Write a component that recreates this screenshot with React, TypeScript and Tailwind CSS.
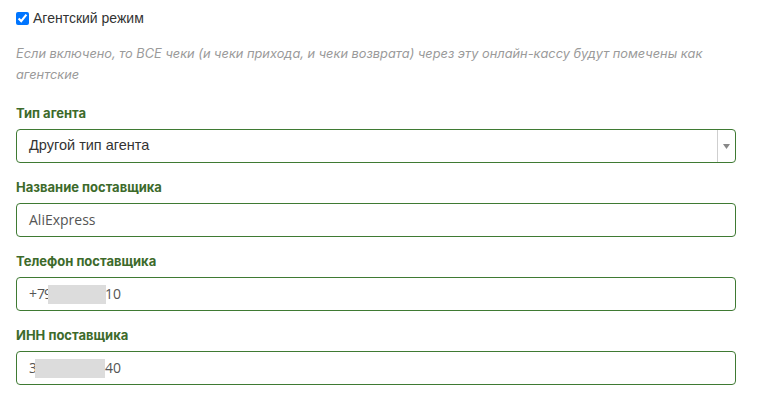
import React from "react";

const labelCls =
  "block text-[13px] leading-5 font-bold text-[#3d6a2b] mb-1.5 font-['Inter',sans-serif]";
const boxCls =
  "w-full h-[34px] rounded-[4px] border border-[#3f7a33] bg-white flex items-center";

const Blur: React.FC<{ w: string }> = ({ w }) => (
  <span className={`inline-block h-[19px] bg-[#dcdcdc] align-middle ${w}`} />
);

export default function App() {
  return (
    <div className="w-[757px] h-[400px] bg-white overflow-hidden">
      <div className="w-[720px] ml-4 pt-[10px]">
        {/* checkbox */}
        <label className="flex items-center gap-1 text-sm text-[#333] font-['Liberation_Sans',Arial,sans-serif]">
          <input type="checkbox" defaultChecked className="w-[13px] h-[13px] m-0" />
          <span className="leading-4">Агентский режим</span>
        </label>

        <p className="mt-[17px] text-[12.8px] leading-[21px] italic text-[#9a9a9a] font-['Inter',sans-serif]">
          Если включено, то ВСЕ чеки (и чеки прихода, и чеки возврата) через эту онлайн-кассу будут помечены как агентские
        </p>

        {/* agent type */}
        <div className="mt-[18px]">
          <span className={labelCls}>Тип агента</span>
          <div className={boxCls}>
            <span className="flex-1 pl-3 text-[14.5px] text-[#333] font-['Liberation_Sans',Arial,sans-serif]">
              Другой тип агента
            </span>
            <div className="w-[18px] h-full border-l border-[#cfcfcf] flex items-center justify-center">
              <svg width="7" height="5" viewBox="0 0 7 5">
                <path d="M0 0h7L3.5 5z" fill="#888" />
              </svg>
            </div>
          </div>
        </div>

        <div className="mt-[14px]">
          <span className={labelCls}>Название поставщика</span>
          <div className={boxCls}>
            <span className="pl-3 text-sm text-[#555] font-['Open_Sans',sans-serif]">AliExpress</span>
          </div>
        </div>

        <div className="mt-[14px]">
          <span className={labelCls}>Телефон поставщика</span>
          <div className={boxCls}>
            <span className="pl-3 text-sm text-[#555] font-['Open_Sans',sans-serif] flex items-center">
              +7<span className="-ml-px">9</span>
              <span className="-ml-[4px] inline-flex"><Blur w="w-[58px]" /></span>
              <span className="-ml-px">10</span>
            </span>
          </div>
        </div>

        <div className="mt-[14px]">
          <span className={labelCls}>ИНН поставщика</span>
          <div className={boxCls}>
            <span className="pl-3 text-sm text-[#555] font-['Open_Sans',sans-serif] flex items-center">
              3<span className="-ml-[2px] inline-flex"><Blur w="w-[70px]" /></span>
              <span>40</span>
            </span>
          </div>
        </div>
      </div>
    </div>
  );
}
